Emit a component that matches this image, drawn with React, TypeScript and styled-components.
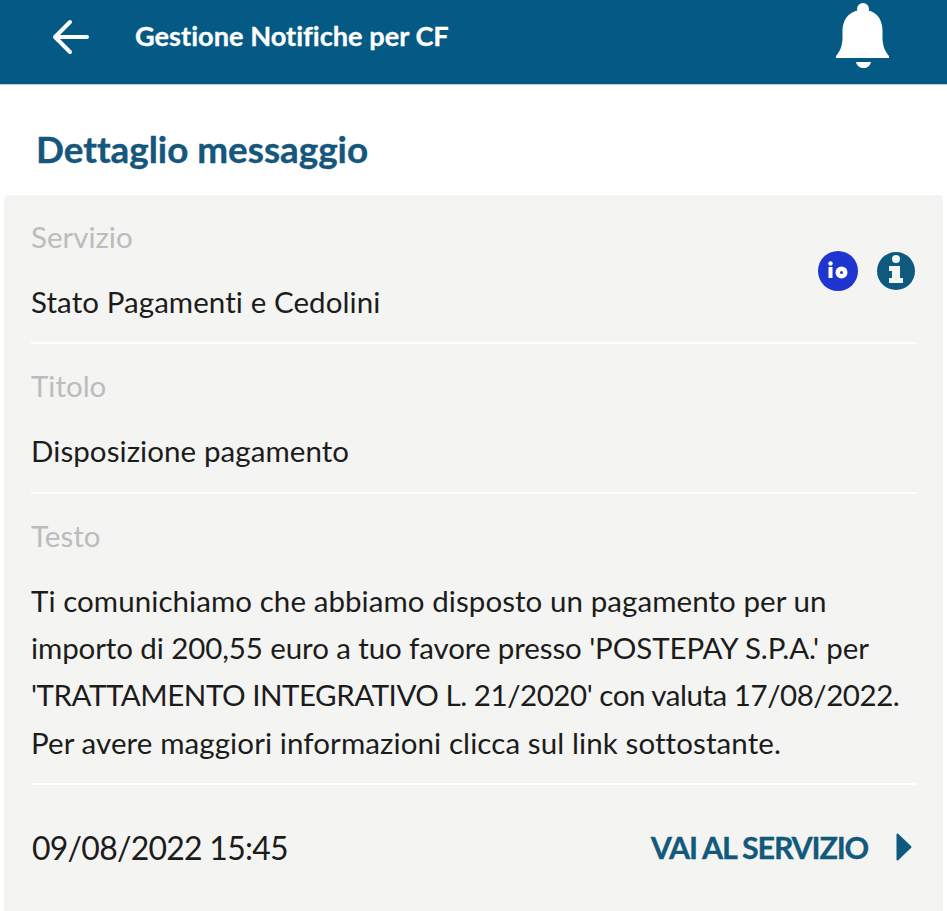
import React from 'react';
import styled, { createGlobalStyle } from 'styled-components';

const GlobalStyle = createGlobalStyle`
  html, body {
    margin: 0;
    padding: 0;
    background: #fff;
    overflow: hidden;
  }
`;

const Page = styled.div`
  width: 947px;
  height: 911px;
  font-family: Lato, 'Noto Sans', sans-serif;
  font-variant-ligatures: none;
  overflow: hidden;
`;

const Header = styled.header`
  height: 84px;
  background: #055a85;
  display: flex;
  align-items: center;
  padding: 0 57px 0 52px;
  border-bottom: 1px solid #b9d0dd;
  box-sizing: content-box;
`;

const BackButton = styled.svg`
  width: 38px;
  height: 36px;
  margin-right: 45px;
  margin-bottom: 11px;
`;

const HeaderTitle = styled.h1`
  flex: 1;
  margin: 0 0 12px;
  font-size: 27.2px;
  font-weight: 700;
  color: #fff;
  line-height: 34px;
  -webkit-text-stroke: 0.3px #fff;
`;

const Bell = styled.svg`
  width: 54px;
  height: 66px;
  margin-bottom: 12px;
`;

const PageTitle = styled.h2`
  margin: 0;
  height: 110px;
  padding: 42px 0 0 36px;
  box-sizing: border-box;
  font-size: 36.8px;
  line-height: 44px;
  font-weight: 700;
  color: #15577c;
  -webkit-text-stroke: 0.4px #15577c;
`;

const Card = styled.section`
  margin: 0 4px;
  height: 716px;
  background: #f4f4f2;
  border-radius: 4px 4px 0 0;
  padding: 0 27px;
`;

const Field = styled.div<{ $height: number }>`
  position: relative;
  height: ${p => p.$height}px;
  border-bottom: 2px solid #fff;
  box-sizing: border-box;
  padding-top: 23px;
`;

const Label = styled.div`
  font-size: 29.5px;
  line-height: 38px;
  color: #bcbcbc;
`;

const Value = styled.div`
  margin-top: 27px;
  font-size: 29.5px;
  line-height: 38px;
  letter-spacing: 0.08px;
  color: #1c1c1c;
`;

const Body = styled.div`
  margin-top: 22px;
`;

const BodyLine = styled.div<{ $tracking: number }>`
  font-size: 29.5px;
  line-height: 47.2px;
  color: #1c1c1c;
  white-space: nowrap;
  letter-spacing: ${p => p.$tracking}px;
`;

const Badges = styled.div`
  position: absolute;
  right: 0;
  top: 56px;
  display: flex;
  gap: 18px;
`;

const Badge = styled.svg`
  width: 40px;
  height: 40px;
  display: block;
`;

const Footer = styled.div`
  display: flex;
  align-items: center;
  justify-content: space-between;
  height: 126px;
  padding-bottom: 2px;
  box-sizing: border-box;
`;

const DateText = styled.div`
  font-size: 32px;
  letter-spacing: -0.75px;
  padding-left: 1px;
  color: #1c1c1c;
`;

const ServiceLink = styled.a`
  display: flex;
  align-items: center;
  gap: 28px;
  font-size: 30.5px;
  font-weight: 700;
  letter-spacing: -1.2px;
  color: #12597c;
  -webkit-text-stroke: 0.3px #12597c;
`;

const Arrow = styled.svg`
  width: 16px;
  height: 28px;
  margin-right: 4px;
`;

export default function App() {
  return (
    <Page>
      <GlobalStyle />
      <Header>
        <BackButton viewBox="0 0 38 36" fill="none" stroke="#fff" strokeWidth="4" strokeLinecap="round" strokeLinejoin="round">
          <path d="M35 18H3M18 3 3 18l15 15" />
        </BackButton>
        <HeaderTitle>Gestione Notifiche per CF</HeaderTitle>
        <Bell viewBox="0 0 54 66" fill="#fff">
          <circle cx="27" cy="6" r="6" />
          <path d="M27 7C15 7 7 14 6.500 27v9C6 44 4 48 0 53v2h53v-2c-4-5-6-9-6.500-17v-9C46 14 39 7 27 7Z" />
          <path d="M20 59h15c-1 4-4 6-7.500 6S21 63 20 59Z" />
        </Bell>
      </Header>
      <PageTitle>Dettaglio messaggio</PageTitle>
      <Card>
        <Field $height={149}>
          <Label>Servizio</Label>
          <Value>Stato Pagamenti e Cedolini</Value>
          <Badges>
            <Badge viewBox="0 0 40 40">
              <circle cx="20" cy="20" r="20" fill="#1f35cf" />
              <rect x="10.500" y="16" width="4" height="11" fill="#fff" />
              <circle cx="12.500" cy="12.500" r="2.200" fill="#fff" />
              <circle cx="23.500" cy="21.500" r="6" fill="#fff" />
              <circle cx="23.500" cy="21.500" r="1.500" fill="#1f35cf" />
            </Badge>
            <Badge viewBox="0 0 40 40">
              <circle cx="20" cy="20" r="19" fill="#0e5a7e" />
              <circle cx="20" cy="8" r="4" fill="#f4f4f2" />
              <path d="M13 15h11v12h3v5H13v-5h3v-7h-3Z" fill="#f4f4f2" />
            </Badge>
          </Badges>
        </Field>
        <Field $height={150}>
          <Label>Titolo</Label>
          <Value>Disposizione pagamento</Value>
        </Field>
        <Field $height={291}>
          <Label>Testo</Label>
          <Body>
            <BodyLine $tracking={0.07}>Ti comunichiamo che abbiamo disposto un pagamento per un</BodyLine>
            <BodyLine $tracking={-0.1}>importo di 200,55 euro a tuo favore presso 'POSTEPAY S.P.A.' per</BodyLine>
            <BodyLine $tracking={-0.46}>'TRATTAMENTO INTEGRATIVO L. 21/2020' con valuta 17/08/2022.</BodyLine>
            <BodyLine $tracking={0.1}>Per avere maggiori informazioni clicca sul link sottostante.</BodyLine>
          </Body>
        </Field>
        <Footer>
          <DateText>09/08/2022 15:45</DateText>
          <ServiceLink>
            VAI AL SERVIZIO
            <Arrow viewBox="0 0 16 28" fill="#0e5a7e">
              <path d="M1.500 1.500v25L14.500 14Z" stroke="#0e5a7e" strokeWidth="2" strokeLinejoin="round" />
            </Arrow>
          </ServiceLink>
        </Footer>
      </Card>
    </Page>
  );
}
